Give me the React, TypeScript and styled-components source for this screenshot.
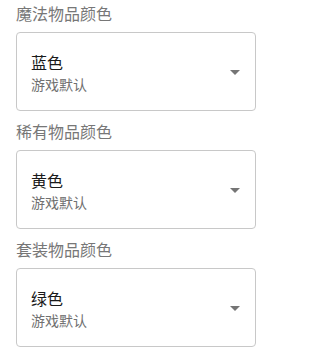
import React from "react";
import styled, { createGlobalStyle } from "styled-components";

const Global = createGlobalStyle`
  html, body { margin: 0; padding: 0; background: #ffffff; }
  body { font-family: "Noto Sans CJK SC", "Noto Sans", sans-serif; }
`;

const Page = styled.div`
  display: flex;
  flex-direction: column;
  gap: 8px;
  padding: 1px 14px 0 16px;
  width: 240px;
`;

const Field = styled.div`
  display: flex;
  flex-direction: column;
`;

const Label = styled.div`
  font-size: 16px;
  line-height: 24px;
  color: #777777;
  margin-bottom: 7px;
`;

const SelectBox = styled.div`
  box-sizing: border-box;
  height: 79px;
  border: 1px solid #c8c8c8;
  border-radius: 4px;
  display: flex;
  align-items: center;
  padding: 0 15px 0 14px;
`;

const Texts = styled.div`
  flex: 1;
  display: flex;
  flex-direction: column;
  padding-top: 3px;
`;

const Value = styled.div`
  font-size: 16px;
  line-height: 21px;
  color: #1a1a1a;
`;

const Hint = styled.div`
  font-size: 14px;
  line-height: 20px;
  color: #707070;
  margin-top: 1px;
`;

const Caret = styled.svg`
  width: 10px;
  height: 5px;
  flex: none;
  margin-top: 1px;
`;

type Item = { label: string; value: string };

const items: Item[] = [
  { label: "魔法物品颜色", value: "蓝色" },
  { label: "稀有物品颜色", value: "黄色" },
  { label: "套装物品颜色", value: "绿色" },
];

export default function App() {
  return (
    <>
      <Global />
      <Page>
        {items.map((it) => (
          <Field key={it.label}>
            <Label>{it.label}</Label>
            <SelectBox>
              <Texts>
                <Value>{it.value}</Value>
                <Hint>游戏默认</Hint>
              </Texts>
              <Caret viewBox="0 0 10 5">
                <path d="M0 0 L5 5 L10 0 Z" fill="#757575" />
              </Caret>
            </SelectBox>
          </Field>
        ))}
      </Page>
    </>
  );
}
